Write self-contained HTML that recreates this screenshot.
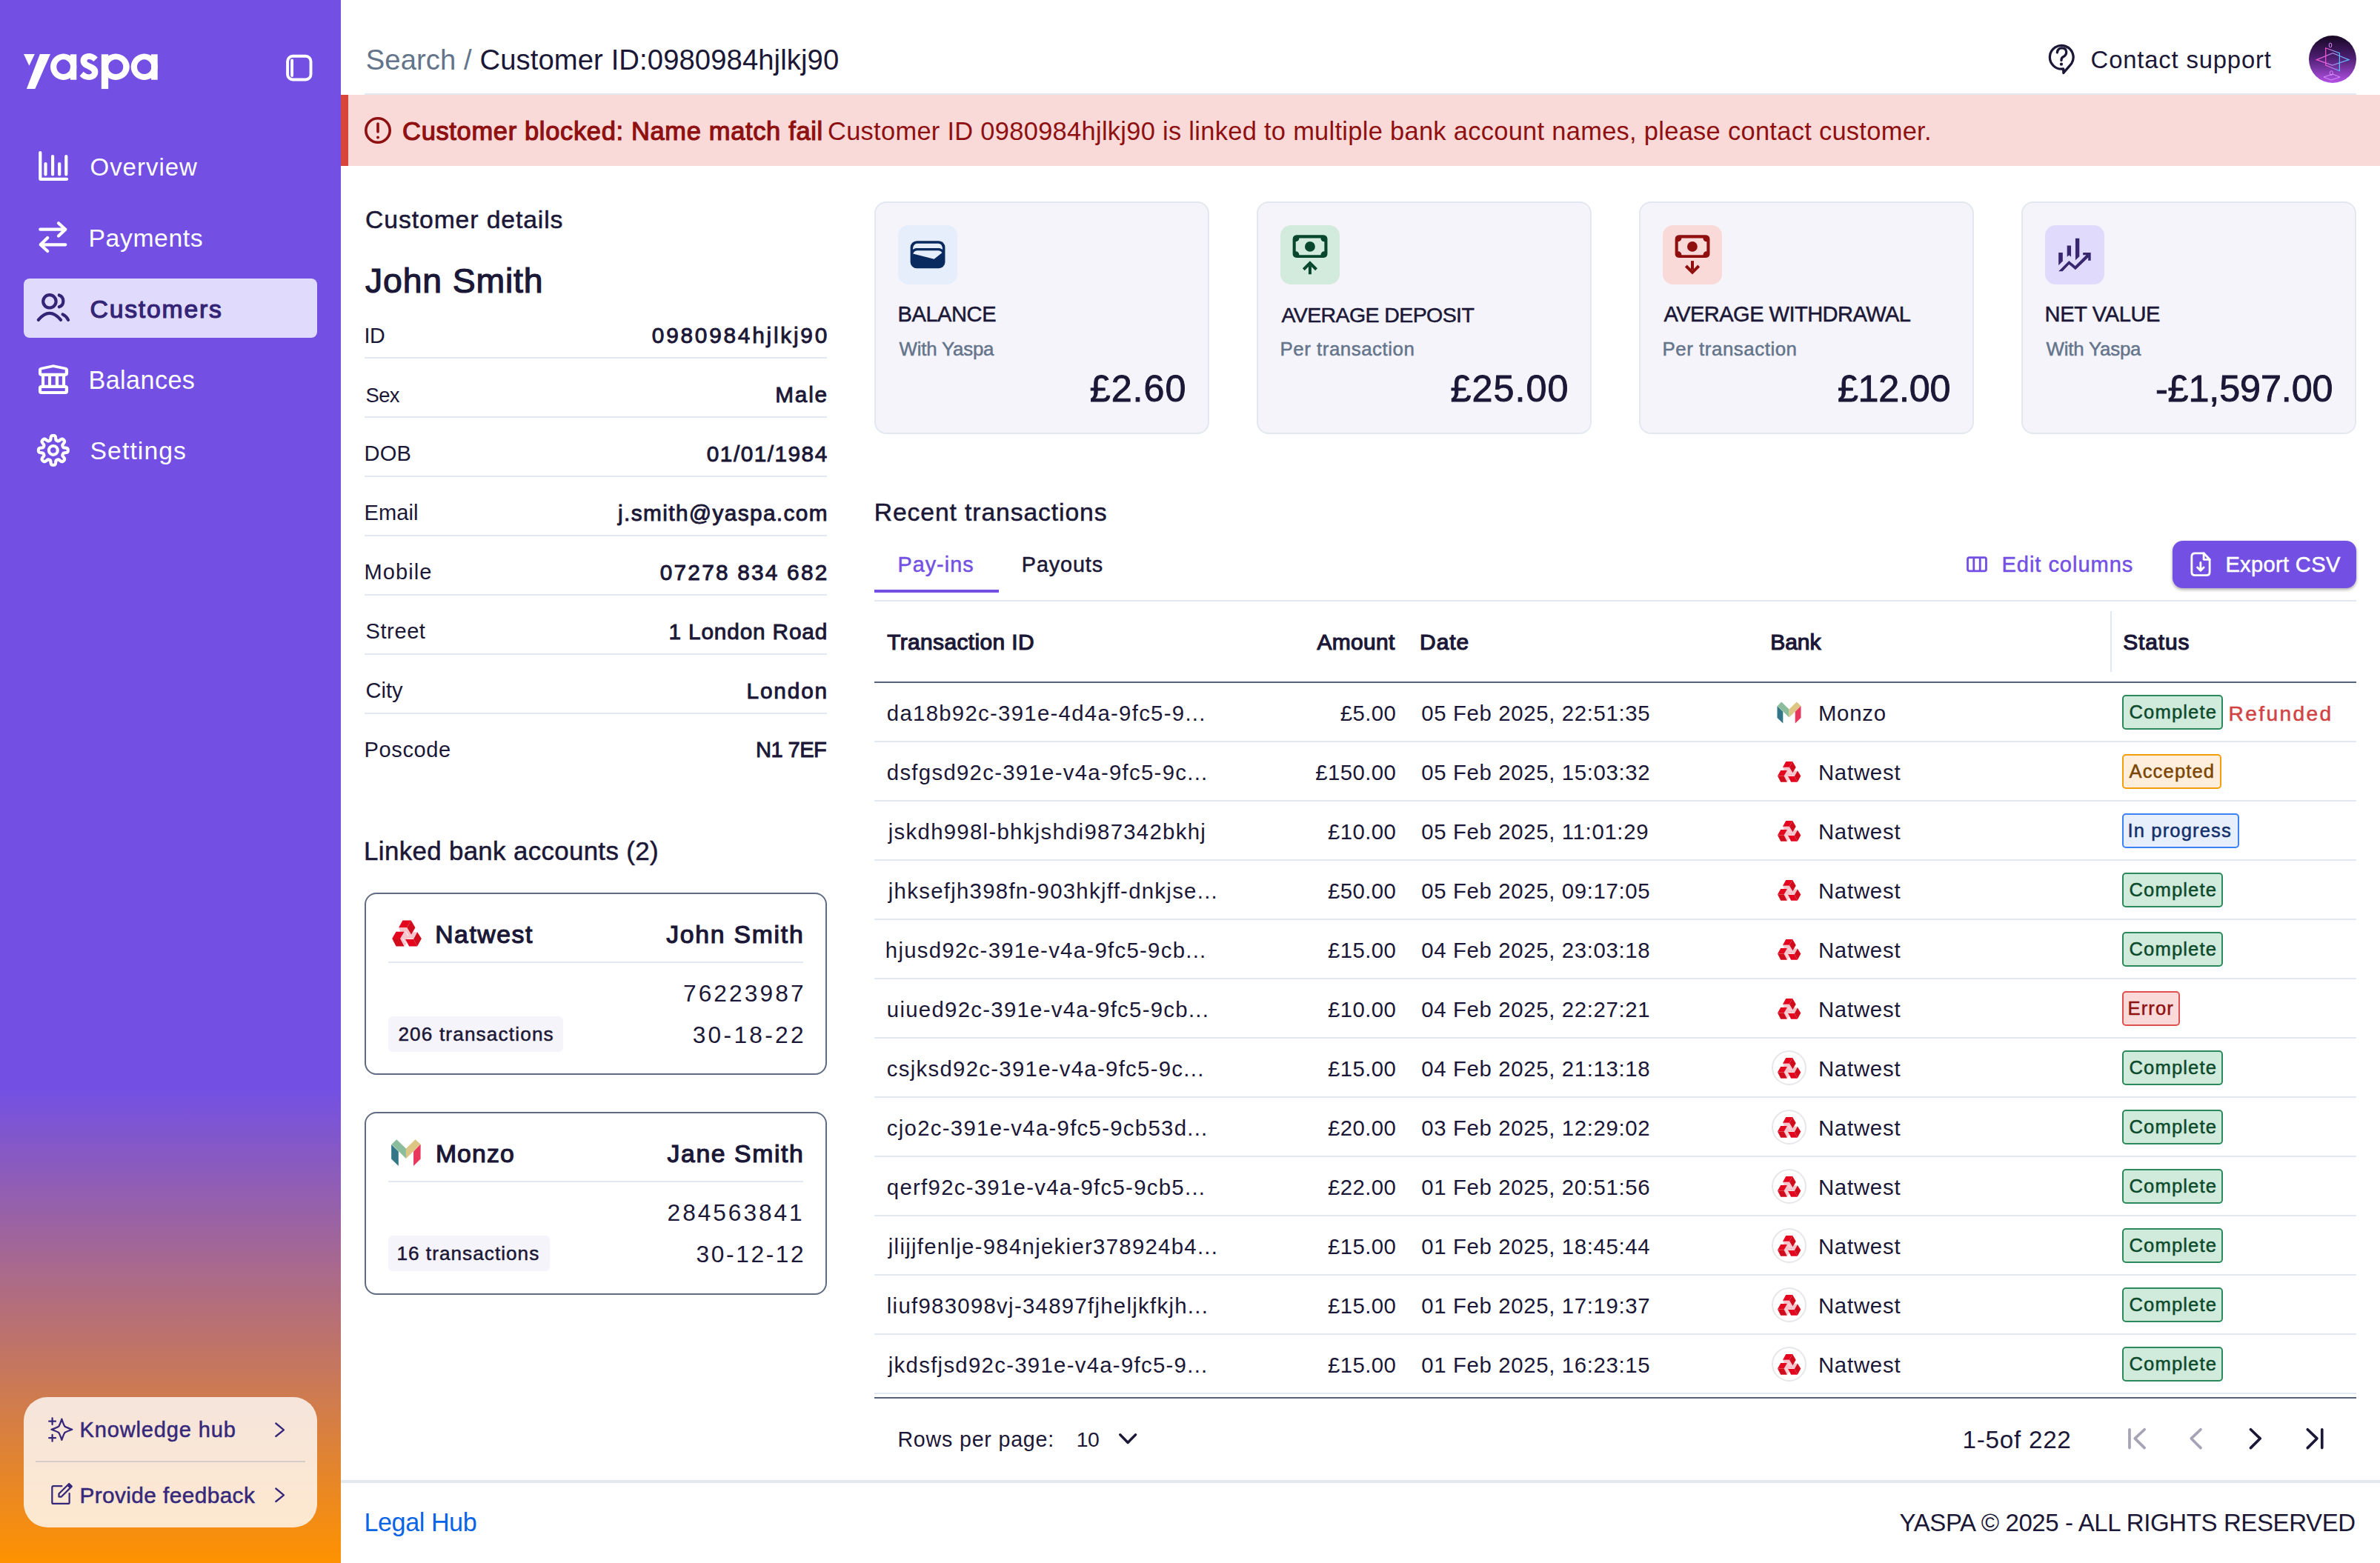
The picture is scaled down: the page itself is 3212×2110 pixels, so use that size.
<!DOCTYPE html>
<html><head><meta charset="utf-8">
<style>
*{box-sizing:border-box;margin:0;padding:0}
html,body{width:3212px;height:2110px;overflow:hidden;background:#fff}
body{font-family:"Liberation Sans",sans-serif;color:#1c1a3c}
#root{position:absolute;left:0;top:0;width:1606px;height:1055px;zoom:2;overflow:hidden}
.b{position:absolute}
.t{position:absolute;white-space:nowrap;line-height:1}
svg.ov{position:absolute;left:0;top:0;width:1606px;height:1055px}
@media (max-width:2400px){html,body{width:1606px;height:1055px}#root{zoom:1}}
</style></head><body><div id="root">
<div class="b" style="left:0.00px;top:0.00px;width:230.00px;height:1055.00px;background:linear-gradient(to bottom,#7350e3 0%,#7350e3 69.6%,#ff9200 100%)"></div>
<div class="b" style="left:16.00px;top:188.10px;width:198.00px;height:40.00px;background:#e0dbfc;border-radius:4px"></div>
<div class="b" style="left:16.20px;top:943.00px;width:197.80px;height:88.00px;background:rgba(255,255,255,0.8);border-radius:16px"></div>
<div class="b" style="left:24.00px;top:986.00px;width:182.00px;height:1.00px;background:#d4cbcb"></div>
<div class="b" style="left:246.00px;top:63.00px;width:1344.00px;height:1.00px;background:#e2e8f0"></div>
<div class="b" style="left:230.00px;top:64.00px;width:1376.00px;height:48.00px;background:#fad9d9"></div>
<div class="b" style="left:230.00px;top:64.00px;width:5.00px;height:48.00px;background:#d9443b"></div>
<div class="b" style="left:246.00px;top:241.00px;width:312.00px;height:1.00px;background:#e2e8f0"></div>
<div class="b" style="left:246.00px;top:281.00px;width:312.00px;height:1.00px;background:#e2e8f0"></div>
<div class="b" style="left:246.00px;top:321.00px;width:312.00px;height:1.00px;background:#e2e8f0"></div>
<div class="b" style="left:246.00px;top:361.00px;width:312.00px;height:1.00px;background:#e2e8f0"></div>
<div class="b" style="left:246.00px;top:401.00px;width:312.00px;height:1.00px;background:#e2e8f0"></div>
<div class="b" style="left:246.00px;top:441.00px;width:312.00px;height:1.00px;background:#e2e8f0"></div>
<div class="b" style="left:246.00px;top:481.00px;width:312.00px;height:1.00px;background:#e2e8f0"></div>
<div class="b" style="left:246.20px;top:602.40px;width:311.70px;height:123.30px;border:1px solid #5f6b80;border-radius:8px"></div>
<div class="b" style="left:262.10px;top:649.00px;width:279.80px;height:1.00px;background:#e2e8f0"></div>
<div class="b" style="left:246.20px;top:750.50px;width:311.70px;height:123.30px;border:1px solid #5f6b80;border-radius:8px"></div>
<div class="b" style="left:262.10px;top:797.10px;width:279.80px;height:1.00px;background:#e2e8f0"></div>
<div class="b" style="left:262.10px;top:686.10px;width:118.00px;height:24.00px;background:#f5f4fa;border-radius:3px"></div>
<div class="b" style="left:262.10px;top:834.20px;width:109.00px;height:24.00px;background:#f5f4fa;border-radius:3px"></div>
<div class="b" style="left:590.10px;top:136.20px;width:225.80px;height:156.60px;background:#f5f4fa;border:1px solid #e2e8f0;border-radius:8px"></div>
<div class="b" style="left:606.20px;top:152.00px;width:39.80px;height:39.80px;background:#e6eefb;border-radius:7px"></div>
<div class="b" style="left:848.10px;top:136.20px;width:225.80px;height:156.60px;background:#f5f4fa;border:1px solid #e2e8f0;border-radius:8px"></div>
<div class="b" style="left:864.20px;top:152.00px;width:39.80px;height:39.80px;background:#d3ebdc;border-radius:7px"></div>
<div class="b" style="left:1106.10px;top:136.20px;width:225.80px;height:156.60px;background:#f5f4fa;border:1px solid #e2e8f0;border-radius:8px"></div>
<div class="b" style="left:1122.20px;top:152.00px;width:39.80px;height:39.80px;background:#fad9d9;border-radius:7px"></div>
<div class="b" style="left:1364.10px;top:136.20px;width:225.80px;height:156.60px;background:#f5f4fa;border:1px solid #e2e8f0;border-radius:8px"></div>
<div class="b" style="left:1380.20px;top:152.00px;width:39.80px;height:39.80px;background:#e0dbfc;border-radius:7px"></div>
<div class="b" style="left:590.00px;top:397.90px;width:84.00px;height:2.00px;background:#7350e3"></div>
<div class="b" style="left:590.00px;top:405.00px;width:1000.00px;height:1.00px;background:#e2e8f0"></div>
<div class="b" style="left:1466.10px;top:365.00px;width:123.90px;height:31.80px;background:#7350e3;border-radius:7px;box-shadow:0 1px 2px rgba(0,0,0,0.35)"></div>
<div class="b" style="left:1424.00px;top:412.40px;width:1.00px;height:41.00px;background:#e2e8f0"></div>
<div class="b" style="left:590.00px;top:460.00px;width:1000.00px;height:1.00px;background:#56617a"></div>
<div class="b" style="left:590.00px;top:500.00px;width:1000.00px;height:1.00px;background:#e2e8f0"></div>
<div class="b" style="left:590.00px;top:540.00px;width:1000.00px;height:1.00px;background:#e2e8f0"></div>
<div class="b" style="left:590.00px;top:580.00px;width:1000.00px;height:1.00px;background:#e2e8f0"></div>
<div class="b" style="left:590.00px;top:620.00px;width:1000.00px;height:1.00px;background:#e2e8f0"></div>
<div class="b" style="left:590.00px;top:660.00px;width:1000.00px;height:1.00px;background:#e2e8f0"></div>
<div class="b" style="left:590.00px;top:700.00px;width:1000.00px;height:1.00px;background:#e2e8f0"></div>
<div class="b" style="left:590.00px;top:740.00px;width:1000.00px;height:1.00px;background:#e2e8f0"></div>
<div class="b" style="left:590.00px;top:780.00px;width:1000.00px;height:1.00px;background:#e2e8f0"></div>
<div class="b" style="left:590.00px;top:820.00px;width:1000.00px;height:1.00px;background:#e2e8f0"></div>
<div class="b" style="left:590.00px;top:860.00px;width:1000.00px;height:1.00px;background:#e2e8f0"></div>
<div class="b" style="left:590.00px;top:900.00px;width:1000.00px;height:1.00px;background:#e2e8f0"></div>
<div class="b" style="left:590.00px;top:940.00px;width:1000.00px;height:1.00px;background:#e2e8f0"></div>
<div class="b" style="left:590.00px;top:943.00px;width:1000.00px;height:1.20px;background:#56617a"></div>
<div class="b" style="left:230.00px;top:999.00px;width:1376.00px;height:2.00px;background:#e2e8f0"></div>
<div class="b" style="left:1432.10px;top:469.15px;width:67.70px;height:23.60px;background:#d0ebdc;border:1px solid #2a8a5c;border-radius:2.5px"></div>
<div class="b" style="left:1432.10px;top:509.15px;width:66.80px;height:23.60px;background:#ffeedb;border:1px solid #f59e0b;border-radius:2.5px"></div>
<div class="b" style="left:1432.10px;top:549.15px;width:78.90px;height:23.60px;background:#e8effc;border:1px solid #3b82f6;border-radius:2.5px"></div>
<div class="b" style="left:1432.10px;top:589.15px;width:67.70px;height:23.60px;background:#d0ebdc;border:1px solid #2a8a5c;border-radius:2.5px"></div>
<div class="b" style="left:1432.10px;top:629.15px;width:67.70px;height:23.60px;background:#d0ebdc;border:1px solid #2a8a5c;border-radius:2.5px"></div>
<div class="b" style="left:1432.10px;top:669.15px;width:38.80px;height:23.60px;background:#fad9d9;border:1px solid #e05050;border-radius:2.5px"></div>
<div class="b" style="left:1432.10px;top:709.15px;width:67.70px;height:23.60px;background:#d0ebdc;border:1px solid #2a8a5c;border-radius:2.5px"></div>
<div class="b" style="left:1432.10px;top:749.15px;width:67.70px;height:23.60px;background:#d0ebdc;border:1px solid #2a8a5c;border-radius:2.5px"></div>
<div class="b" style="left:1432.10px;top:789.15px;width:67.70px;height:23.60px;background:#d0ebdc;border:1px solid #2a8a5c;border-radius:2.5px"></div>
<div class="b" style="left:1432.10px;top:829.15px;width:67.70px;height:23.60px;background:#d0ebdc;border:1px solid #2a8a5c;border-radius:2.5px"></div>
<div class="b" style="left:1432.10px;top:869.15px;width:67.70px;height:23.60px;background:#d0ebdc;border:1px solid #2a8a5c;border-radius:2.5px"></div>
<div class="b" style="left:1432.10px;top:909.15px;width:67.70px;height:23.60px;background:#d0ebdc;border:1px solid #2a8a5c;border-radius:2.5px"></div>
<div class="b" style="left:1195.40px;top:709.10px;width:23.50px;height:23.50px;border:1px solid #e5e7eb;border-radius:50%"></div>
<div class="b" style="left:1195.40px;top:749.10px;width:23.50px;height:23.50px;border:1px solid #e5e7eb;border-radius:50%"></div>
<div class="b" style="left:1195.40px;top:789.10px;width:23.50px;height:23.50px;border:1px solid #e5e7eb;border-radius:50%"></div>
<div class="b" style="left:1195.40px;top:829.10px;width:23.50px;height:23.50px;border:1px solid #e5e7eb;border-radius:50%"></div>
<div class="b" style="left:1195.40px;top:869.10px;width:23.50px;height:23.50px;border:1px solid #e5e7eb;border-radius:50%"></div>
<div class="b" style="left:1195.40px;top:909.10px;width:23.50px;height:23.50px;border:1px solid #e5e7eb;border-radius:50%"></div>
<svg class="ov" viewBox="0 0 3212 2110" fill="none">
<g transform="translate(20.000 50.000) scale(0.17646)"><g fill="#fff">
<polygon points="68,130 152,130 110,220"/>
<polygon points="192,130 272,130 155,397 90,397"/>
<path fill-rule="evenodd" d="M372 128 a100 100 0 1 0 0.1 0z M372 172 a53 56 0 1 1 -0.1 0z"/>
<rect x="425" y="132" width="47" height="195"/>
<path fill-rule="evenodd" d="M772 128 a105 100 0 1 0 0.1 0z M772 172 a57 56 0 1 1 -0.1 0z"/>
<rect x="662" y="132" width="53" height="265"/>
<path fill-rule="evenodd" d="M990 128 a102 100 0 1 0 0.1 0z M990 172 a55 56 0 1 1 -0.1 0z"/>
<rect x="1043" y="132" width="49" height="195"/>
</g>
</g>
<g transform="translate(100.000 68.000) scale(0.02816)"><path fill="#fff" d="M1130 340 L935 535 C860 450 760 410 690 430 C610 455 590 520 660 570 C720 610 850 660 960 720 C1090 790 1150 900 1150 1030 C1150 1280 950 1420 710 1420 C520 1420 370 1340 270 1225 L450 1020 C560 1120 650 1150 720 1150 C800 1150 850 1110 850 1060 C850 1000 780 960 700 920 C580 860 460 810 400 740 C330 660 305 580 305 490 C305 270 500 140 710 140 C890 140 1040 230 1130 340 Z"/></g>
<g transform="translate(20.000 50.000) scale(0.17646)"><rect x="2086" y="146" width="178" height="180" rx="40" fill="none" stroke="#fff" stroke-width="22"/><line x1="2120" y1="178" x2="2120" y2="295" stroke="#fff" stroke-width="22" stroke-linecap="round"/></g>
<g fill="none" stroke="#fff" stroke-width="4.2" stroke-linecap="round" stroke-linejoin="round"><path d="M54.3 206 V241.8 H90.1"/><path d="M61.5 221 V235.5 M71.1 211 V235.5 M80.2 221 V235.5 M89.3 211 V235.5"/></g>
<g fill="none" stroke="#fff" stroke-width="4.2" stroke-linecap="round" stroke-linejoin="round"><path d="M54.3 309.7 H88.3 M79 301.3 L88.3 309.7 L79 318.6"/><path d="M88.3 330.3 H54.7 M64.2 321 L54.7 330.3 L64.2 339"/></g>
<g fill="none" stroke="#342476" stroke-width="4.2" stroke-linecap="round" stroke-linejoin="round"><circle cx="66.9" cy="406.8" r="8.7"/><path d="M51.8 431.9 Q66.9 414 82 431.9"/><path d="M79.8 398.5 A8.4 8.4 0 0 1 79.8 414.3"/><path d="M84.6 424.4 Q89.5 426.6 92.1 431.9"/></g>
<g transform="translate(46.000 486.000) scale(0.03327)"><path fill="#fff" fill-rule="evenodd" d="M180 420 Q180 310 290 295 L780 185 L1280 295 Q1385 310 1385 420 V540 Q1385 645 1265 660 V1015 Q1385 1030 1385 1130 V1270 Q1385 1385 1270 1385 H295 Q180 1385 180 1270 V1130 Q180 1030 300 1015 V660 Q180 645 180 540 Z M305 400 L775 300 L1255 400 V535 H305 Z M425 660 H570 V1015 H425 Z M695 660 H865 V1015 H695 Z M995 660 H1140 V1015 H995 Z M305 1140 H1255 V1260 H305 Z"/></g>
<g fill="none" stroke="#fff" stroke-width="4.2" stroke-linejoin="round"><path d="M71.85 588.00 L72.28 588.01 L72.72 588.05 L73.15 588.12 L73.57 588.24 L73.98 588.45 L74.37 588.79 L74.70 589.37 L74.97 590.23 L75.15 591.32 L75.28 592.42 L75.43 593.28 L75.61 593.87 L75.83 594.24 L76.08 594.49 L76.34 594.66 L76.61 594.81 L76.89 594.94 L77.17 595.06 L77.45 595.17 L77.74 595.28 L78.03 595.36 L78.34 595.42 L78.69 595.42 L79.11 595.32 L79.66 595.03 L80.37 594.52 L81.24 593.85 L82.14 593.20 L82.94 592.78 L83.58 592.61 L84.10 592.64 L84.53 592.78 L84.92 593.00 L85.27 593.25 L85.61 593.53 L85.92 593.83 L86.22 594.14 L86.50 594.48 L86.75 594.83 L86.97 595.22 L87.11 595.65 L87.14 596.17 L86.97 596.81 L86.55 597.61 L85.90 598.51 L85.23 599.38 L84.72 600.09 L84.43 600.64 L84.33 601.06 L84.33 601.41 L84.39 601.72 L84.47 602.01 L84.58 602.30 L84.69 602.58 L84.81 602.86 L84.94 603.14 L85.09 603.41 L85.26 603.67 L85.51 603.92 L85.88 604.14 L86.47 604.32 L87.33 604.47 L88.43 604.60 L89.52 604.78 L90.38 605.05 L90.96 605.38 L91.30 605.77 L91.51 606.18 L91.63 606.60 L91.70 607.03 L91.74 607.47 L91.75 607.90 L91.74 608.33 L91.70 608.77 L91.63 609.20 L91.51 609.62 L91.30 610.03 L90.96 610.42 L90.38 610.75 L89.52 611.02 L88.43 611.20 L87.33 611.33 L86.47 611.48 L85.88 611.66 L85.51 611.88 L85.26 612.13 L85.09 612.39 L84.94 612.66 L84.81 612.94 L84.69 613.22 L84.58 613.50 L84.47 613.79 L84.39 614.08 L84.33 614.39 L84.33 614.74 L84.43 615.16 L84.72 615.71 L85.23 616.42 L85.90 617.29 L86.55 618.19 L86.97 618.99 L87.14 619.63 L87.11 620.15 L86.97 620.58 L86.75 620.97 L86.50 621.32 L86.22 621.66 L85.92 621.97 L85.61 622.27 L85.27 622.55 L84.92 622.80 L84.53 623.02 L84.10 623.16 L83.58 623.19 L82.94 623.02 L82.14 622.60 L81.24 621.95 L80.37 621.28 L79.66 620.77 L79.11 620.48 L78.69 620.38 L78.34 620.38 L78.03 620.44 L77.74 620.52 L77.45 620.63 L77.17 620.74 L76.89 620.86 L76.61 620.99 L76.34 621.14 L76.08 621.31 L75.83 621.56 L75.61 621.93 L75.43 622.52 L75.28 623.38 L75.15 624.48 L74.97 625.57 L74.70 626.43 L74.37 627.01 L73.98 627.35 L73.57 627.56 L73.15 627.68 L72.72 627.75 L72.28 627.79 L71.85 627.80 L71.42 627.79 L70.98 627.75 L70.55 627.68 L70.13 627.56 L69.72 627.35 L69.33 627.01 L69.00 626.43 L68.73 625.57 L68.55 624.48 L68.42 623.38 L68.27 622.52 L68.09 621.93 L67.87 621.56 L67.62 621.31 L67.36 621.14 L67.09 620.99 L66.81 620.86 L66.53 620.74 L66.25 620.63 L65.96 620.52 L65.67 620.44 L65.36 620.38 L65.01 620.38 L64.59 620.48 L64.04 620.77 L63.33 621.28 L62.46 621.95 L61.56 622.60 L60.76 623.02 L60.12 623.19 L59.60 623.16 L59.17 623.02 L58.78 622.80 L58.43 622.55 L58.09 622.27 L57.78 621.97 L57.48 621.66 L57.20 621.32 L56.95 620.97 L56.73 620.58 L56.59 620.15 L56.56 619.63 L56.73 618.99 L57.15 618.19 L57.80 617.29 L58.47 616.42 L58.98 615.71 L59.27 615.16 L59.37 614.74 L59.37 614.39 L59.31 614.08 L59.23 613.79 L59.12 613.50 L59.01 613.22 L58.89 612.94 L58.76 612.66 L58.61 612.39 L58.44 612.13 L58.19 611.88 L57.82 611.66 L57.23 611.48 L56.37 611.33 L55.27 611.20 L54.18 611.02 L53.32 610.75 L52.74 610.42 L52.40 610.03 L52.19 609.62 L52.07 609.20 L52.00 608.77 L51.96 608.33 L51.95 607.90 L51.96 607.47 L52.00 607.03 L52.07 606.60 L52.19 606.18 L52.40 605.77 L52.74 605.38 L53.32 605.05 L54.18 604.78 L55.27 604.60 L56.37 604.47 L57.23 604.32 L57.82 604.14 L58.19 603.92 L58.44 603.67 L58.61 603.41 L58.76 603.14 L58.89 602.86 L59.01 602.58 L59.12 602.30 L59.23 602.01 L59.31 601.72 L59.37 601.41 L59.37 601.06 L59.27 600.64 L58.98 600.09 L58.47 599.38 L57.80 598.51 L57.15 597.61 L56.73 596.81 L56.56 596.17 L56.59 595.65 L56.73 595.22 L56.95 594.83 L57.20 594.48 L57.48 594.14 L57.78 593.83 L58.09 593.53 L58.43 593.25 L58.78 593.00 L59.17 592.78 L59.60 592.64 L60.12 592.61 L60.76 592.78 L61.56 593.20 L62.46 593.85 L63.33 594.52 L64.04 595.03 L64.59 595.32 L65.01 595.42 L65.36 595.42 L65.67 595.36 L65.96 595.28 L66.25 595.17 L66.53 595.06 L66.81 594.94 L67.09 594.81 L67.36 594.66 L67.62 594.49 L67.87 594.24 L68.09 593.87 L68.27 593.28 L68.42 592.42 L68.55 591.32 L68.73 590.23 L69.00 589.37 L69.33 588.79 L69.72 588.45 L70.13 588.24 L70.55 588.12 L70.98 588.05 L71.42 588.01Z"/><circle cx="71.85" cy="607.90" r="5.9"/></g>
<g transform="translate(56.000 1900.000) scale(0.08961)"><g fill="none" stroke="#35287a" stroke-width="25" stroke-linecap="round" stroke-linejoin="round">
<path d="M305 175 Q330 255 350 285 Q380 305 462 332 Q380 360 350 380 Q330 410 305 490 Q280 410 260 380 Q230 360 150 332 Q230 305 260 285 Q280 255 305 175Z"/>
<path d="M163 160 V258 M114 208 H212 M163 412 V510 M114 460 H212"/></g></g>
<g transform="translate(56.000 1900.000) scale(0.08961)"><g fill="none" stroke="#35287a" stroke-width="25" stroke-linecap="round" stroke-linejoin="round">
<path d="M305 1185 H180 Q160 1185 160 1205 V1430 Q160 1450 180 1450 H400 Q420 1450 420 1430 V1295"/>
<path d="M262 1300 L415 1150 L455 1190 L300 1345 H262 Z"/></g>
<path d="M385 1180 L415 1150 L455 1190 L425 1220Z" fill="#35287a"/></g>
<g fill="none" stroke="#35287a" stroke-width="2.3" stroke-linecap="round" stroke-linejoin="round"><path d="M372.3 1921.5 L383 1930.3 L372.3 1939"/><path d="M372.3 2009.5 L383 2018.3 L372.3 2027"/></g>
<g transform="translate(2740.000 30.000) scale(0.19327)"><g fill="none" stroke="#1b1736" stroke-width="17" stroke-linecap="round" stroke-linejoin="round">
<path d="M232 354 L231.2 325.8 A82 82 0 1 1 287 290 Z"/>
<path d="M188 212 Q192 180 220 180 Q252 180 252 210 Q252 232 228 243 Q217 250 217 266"/></g>
<circle cx="217" cy="293" r="11" fill="#1b1736"/></g>
<g fill="none" stroke="#8f1010" stroke-width="3.6" stroke-linecap="round"><circle cx="510" cy="176" r="16.2"/><path d="M510 167 V178"/></g><circle cx="510" cy="185.5" r="2" fill="#8f1010"/>
<g transform="translate(1212.000 304.000) scale(0.05118)"><rect x="325" y="415" width="915" height="725" rx="170" fill="#082a5e"/>
<path d="M390 645 C390 560 430 485 500 485 L1065 485 C1130 485 1175 540 1175 645 C1140 615 1100 605 1065 605 L500 605 C460 605 420 615 390 645Z" fill="#e6eefb"/>
<path d="M395 750 C420 700 460 670 510 670 L1060 670 C1100 670 1140 690 1160 730 L950 895Z" fill="#e6eefb"/></g>
<g transform="translate(1728.000 304.000) scale(0.05118)"><rect x="325" y="260" width="915" height="602" rx="100" fill="#08472d"/><path d="M495 340 H1065 A90 90 0 0 0 1160 435 V690 A90 90 0 0 0 1065 785 H495 A90 90 0 0 0 405 690 V435 A90 90 0 0 0 495 340Z" fill="#d3ebdc"/><circle cx="780" cy="565" r="135" fill="#08472d"/><g fill="none" stroke="#08472d" stroke-width="78"><path d="M780 1060 V1295"/><path d="M612 1168 L780 1000 L948 1168"/></g></g>
<g transform="translate(2244.000 304.000) scale(0.05118)"><rect x="325" y="260" width="915" height="602" rx="100" fill="#8f0f0f"/><path d="M495 340 H1065 A90 90 0 0 0 1160 435 V690 A90 90 0 0 0 1065 785 H495 A90 90 0 0 0 405 690 V435 A90 90 0 0 0 495 340Z" fill="#fad9d9"/><circle cx="780" cy="565" r="135" fill="#8f0f0f"/><g fill="none" stroke="#8f0f0f" stroke-width="78"><path d="M782 940 V1180"/><path d="M612 1075 L782 1245 L952 1075"/></g></g>
<g transform="translate(2760.000 304.000) scale(0.05118)"><g fill="#38266f">
<polygon points="355,725 465,725 465,950 355,1060"/>
<polygon points="580,535 685,535 685,835 632,790 580,835"/>
<polygon points="800,345 905,345 905,825 800,925"/>
<polygon points="355,1215 632,940 795,1075 1085,785 1000,785 1000,725 1205,725 1205,935 1135,935 1140,850 800,1175 632,1035 460,1215"/>
</g></g>
<g transform="translate(522.900 1234.900) scale(0.03236)"><polygon points="480,548 812,548 995,838 1078,718 1245,718 1085,1018 748,1018 800,1180 715,1310 545,995 708,705 545,705" fill="#f5c3ca"/>
<path d="M760 700 L870 880 M640 990 L760 1190 M820 1005 L1050 1005" stroke="#fff" stroke-width="30" opacity="0.8"/>
<polygon points="470,535 635,235 985,235 815,535" fill="#e4051f"/>
<polygon points="985,235 1160,540 995,830 815,535" fill="#d10c1d"/>
<polygon points="195,995 360,705 700,705 535,995" fill="#e4051f"/>
<polygon points="195,995 535,995 700,1320 360,1320" fill="#d10c1d"/>
<polygon points="745,1020 1085,1020 1245,1320 905,1320" fill="#e4051f"/>
<polygon points="1085,1020 1245,720 1420,995 1245,1320" fill="#d10c1d"/></g>
<g transform="translate(522.000 1532.000) scale(0.03071)"><polygon points="200,420 515,730 515,1365 200,1060" fill="#327688"/>
<polygon points="215,415 430,200 845,600 845,1040" fill="#8bbc9b"/>
<polygon points="845,600 1255,200 1485,415 845,1040" fill="#ddc684"/>
<polygon points="1485,415 1485,1060 1175,1365 1175,730" fill="#e8365d"/></g>
<g transform="translate(2393.525 942.625) scale(0.02488)"><polygon points="200,420 515,730 515,1365 200,1060" fill="#327688"/>
<polygon points="215,415 430,200 845,600 845,1040" fill="#8bbc9b"/>
<polygon points="845,600 1255,200 1485,415 845,1040" fill="#ddc684"/>
<polygon points="1485,415 1485,1060 1175,1365 1175,730" fill="#e8365d"/></g>
<g transform="translate(2394.000 1022.000) scale(0.02560)"><polygon points="480,548 812,548 995,838 1078,718 1245,718 1085,1018 748,1018 800,1180 715,1310 545,995 708,705 545,705" fill="#f5c3ca"/>
<path d="M760 700 L870 880 M640 990 L760 1190 M820 1005 L1050 1005" stroke="#fff" stroke-width="30" opacity="0.8"/>
<polygon points="470,535 635,235 985,235 815,535" fill="#e4051f"/>
<polygon points="985,235 1160,540 995,830 815,535" fill="#d10c1d"/>
<polygon points="195,995 360,705 700,705 535,995" fill="#e4051f"/>
<polygon points="195,995 535,995 700,1320 360,1320" fill="#d10c1d"/>
<polygon points="745,1020 1085,1020 1245,1320 905,1320" fill="#e4051f"/>
<polygon points="1085,1020 1245,720 1420,995 1245,1320" fill="#d10c1d"/></g>
<g transform="translate(2394.000 1102.000) scale(0.02560)"><polygon points="480,548 812,548 995,838 1078,718 1245,718 1085,1018 748,1018 800,1180 715,1310 545,995 708,705 545,705" fill="#f5c3ca"/>
<path d="M760 700 L870 880 M640 990 L760 1190 M820 1005 L1050 1005" stroke="#fff" stroke-width="30" opacity="0.8"/>
<polygon points="470,535 635,235 985,235 815,535" fill="#e4051f"/>
<polygon points="985,235 1160,540 995,830 815,535" fill="#d10c1d"/>
<polygon points="195,995 360,705 700,705 535,995" fill="#e4051f"/>
<polygon points="195,995 535,995 700,1320 360,1320" fill="#d10c1d"/>
<polygon points="745,1020 1085,1020 1245,1320 905,1320" fill="#e4051f"/>
<polygon points="1085,1020 1245,720 1420,995 1245,1320" fill="#d10c1d"/></g>
<g transform="translate(2394.000 1182.000) scale(0.02560)"><polygon points="480,548 812,548 995,838 1078,718 1245,718 1085,1018 748,1018 800,1180 715,1310 545,995 708,705 545,705" fill="#f5c3ca"/>
<path d="M760 700 L870 880 M640 990 L760 1190 M820 1005 L1050 1005" stroke="#fff" stroke-width="30" opacity="0.8"/>
<polygon points="470,535 635,235 985,235 815,535" fill="#e4051f"/>
<polygon points="985,235 1160,540 995,830 815,535" fill="#d10c1d"/>
<polygon points="195,995 360,705 700,705 535,995" fill="#e4051f"/>
<polygon points="195,995 535,995 700,1320 360,1320" fill="#d10c1d"/>
<polygon points="745,1020 1085,1020 1245,1320 905,1320" fill="#e4051f"/>
<polygon points="1085,1020 1245,720 1420,995 1245,1320" fill="#d10c1d"/></g>
<g transform="translate(2394.000 1262.000) scale(0.02560)"><polygon points="480,548 812,548 995,838 1078,718 1245,718 1085,1018 748,1018 800,1180 715,1310 545,995 708,705 545,705" fill="#f5c3ca"/>
<path d="M760 700 L870 880 M640 990 L760 1190 M820 1005 L1050 1005" stroke="#fff" stroke-width="30" opacity="0.8"/>
<polygon points="470,535 635,235 985,235 815,535" fill="#e4051f"/>
<polygon points="985,235 1160,540 995,830 815,535" fill="#d10c1d"/>
<polygon points="195,995 360,705 700,705 535,995" fill="#e4051f"/>
<polygon points="195,995 535,995 700,1320 360,1320" fill="#d10c1d"/>
<polygon points="745,1020 1085,1020 1245,1320 905,1320" fill="#e4051f"/>
<polygon points="1085,1020 1245,720 1420,995 1245,1320" fill="#d10c1d"/></g>
<g transform="translate(2394.000 1342.000) scale(0.02560)"><polygon points="480,548 812,548 995,838 1078,718 1245,718 1085,1018 748,1018 800,1180 715,1310 545,995 708,705 545,705" fill="#f5c3ca"/>
<path d="M760 700 L870 880 M640 990 L760 1190 M820 1005 L1050 1005" stroke="#fff" stroke-width="30" opacity="0.8"/>
<polygon points="470,535 635,235 985,235 815,535" fill="#e4051f"/>
<polygon points="985,235 1160,540 995,830 815,535" fill="#d10c1d"/>
<polygon points="195,995 360,705 700,705 535,995" fill="#e4051f"/>
<polygon points="195,995 535,995 700,1320 360,1320" fill="#d10c1d"/>
<polygon points="745,1020 1085,1020 1245,1320 905,1320" fill="#e4051f"/>
<polygon points="1085,1020 1245,720 1420,995 1245,1320" fill="#d10c1d"/></g>
<g transform="translate(2394.000 1422.000) scale(0.02560)"><polygon points="480,548 812,548 995,838 1078,718 1245,718 1085,1018 748,1018 800,1180 715,1310 545,995 708,705 545,705" fill="#f5c3ca"/>
<path d="M760 700 L870 880 M640 990 L760 1190 M820 1005 L1050 1005" stroke="#fff" stroke-width="30" opacity="0.8"/>
<polygon points="470,535 635,235 985,235 815,535" fill="#e4051f"/>
<polygon points="985,235 1160,540 995,830 815,535" fill="#d10c1d"/>
<polygon points="195,995 360,705 700,705 535,995" fill="#e4051f"/>
<polygon points="195,995 535,995 700,1320 360,1320" fill="#d10c1d"/>
<polygon points="745,1020 1085,1020 1245,1320 905,1320" fill="#e4051f"/>
<polygon points="1085,1020 1245,720 1420,995 1245,1320" fill="#d10c1d"/></g>
<g transform="translate(2394.000 1502.000) scale(0.02560)"><polygon points="480,548 812,548 995,838 1078,718 1245,718 1085,1018 748,1018 800,1180 715,1310 545,995 708,705 545,705" fill="#f5c3ca"/>
<path d="M760 700 L870 880 M640 990 L760 1190 M820 1005 L1050 1005" stroke="#fff" stroke-width="30" opacity="0.8"/>
<polygon points="470,535 635,235 985,235 815,535" fill="#e4051f"/>
<polygon points="985,235 1160,540 995,830 815,535" fill="#d10c1d"/>
<polygon points="195,995 360,705 700,705 535,995" fill="#e4051f"/>
<polygon points="195,995 535,995 700,1320 360,1320" fill="#d10c1d"/>
<polygon points="745,1020 1085,1020 1245,1320 905,1320" fill="#e4051f"/>
<polygon points="1085,1020 1245,720 1420,995 1245,1320" fill="#d10c1d"/></g>
<g transform="translate(2394.000 1582.000) scale(0.02560)"><polygon points="480,548 812,548 995,838 1078,718 1245,718 1085,1018 748,1018 800,1180 715,1310 545,995 708,705 545,705" fill="#f5c3ca"/>
<path d="M760 700 L870 880 M640 990 L760 1190 M820 1005 L1050 1005" stroke="#fff" stroke-width="30" opacity="0.8"/>
<polygon points="470,535 635,235 985,235 815,535" fill="#e4051f"/>
<polygon points="985,235 1160,540 995,830 815,535" fill="#d10c1d"/>
<polygon points="195,995 360,705 700,705 535,995" fill="#e4051f"/>
<polygon points="195,995 535,995 700,1320 360,1320" fill="#d10c1d"/>
<polygon points="745,1020 1085,1020 1245,1320 905,1320" fill="#e4051f"/>
<polygon points="1085,1020 1245,720 1420,995 1245,1320" fill="#d10c1d"/></g>
<g transform="translate(2394.000 1662.000) scale(0.02560)"><polygon points="480,548 812,548 995,838 1078,718 1245,718 1085,1018 748,1018 800,1180 715,1310 545,995 708,705 545,705" fill="#f5c3ca"/>
<path d="M760 700 L870 880 M640 990 L760 1190 M820 1005 L1050 1005" stroke="#fff" stroke-width="30" opacity="0.8"/>
<polygon points="470,535 635,235 985,235 815,535" fill="#e4051f"/>
<polygon points="985,235 1160,540 995,830 815,535" fill="#d10c1d"/>
<polygon points="195,995 360,705 700,705 535,995" fill="#e4051f"/>
<polygon points="195,995 535,995 700,1320 360,1320" fill="#d10c1d"/>
<polygon points="745,1020 1085,1020 1245,1320 905,1320" fill="#e4051f"/>
<polygon points="1085,1020 1245,720 1420,995 1245,1320" fill="#d10c1d"/></g>
<g transform="translate(2394.000 1742.000) scale(0.02560)"><polygon points="480,548 812,548 995,838 1078,718 1245,718 1085,1018 748,1018 800,1180 715,1310 545,995 708,705 545,705" fill="#f5c3ca"/>
<path d="M760 700 L870 880 M640 990 L760 1190 M820 1005 L1050 1005" stroke="#fff" stroke-width="30" opacity="0.8"/>
<polygon points="470,535 635,235 985,235 815,535" fill="#e4051f"/>
<polygon points="985,235 1160,540 995,830 815,535" fill="#d10c1d"/>
<polygon points="195,995 360,705 700,705 535,995" fill="#e4051f"/>
<polygon points="195,995 535,995 700,1320 360,1320" fill="#d10c1d"/>
<polygon points="745,1020 1085,1020 1245,1320 905,1320" fill="#e4051f"/>
<polygon points="1085,1020 1245,720 1420,995 1245,1320" fill="#d10c1d"/></g>
<g transform="translate(2394.000 1822.000) scale(0.02560)"><polygon points="480,548 812,548 995,838 1078,718 1245,718 1085,1018 748,1018 800,1180 715,1310 545,995 708,705 545,705" fill="#f5c3ca"/>
<path d="M760 700 L870 880 M640 990 L760 1190 M820 1005 L1050 1005" stroke="#fff" stroke-width="30" opacity="0.8"/>
<polygon points="470,535 635,235 985,235 815,535" fill="#e4051f"/>
<polygon points="985,235 1160,540 995,830 815,535" fill="#d10c1d"/>
<polygon points="195,995 360,705 700,705 535,995" fill="#e4051f"/>
<polygon points="195,995 535,995 700,1320 360,1320" fill="#d10c1d"/>
<polygon points="745,1020 1085,1020 1245,1320 905,1320" fill="#e4051f"/>
<polygon points="1085,1020 1245,720 1420,995 1245,1320" fill="#d10c1d"/></g>
<g transform="translate(2640.000 720.000) scale(0.23529)"><g fill="none" stroke="#7350e3" stroke-width="12" stroke-linejoin="round"><rect x="66" y="139" width="106" height="77" rx="10"/><path d="M101 139 V216 M137 139 V216"/></g></g>
<g transform="translate(2640.000 720.000) scale(0.23529)"><g fill="none" stroke="#fff" stroke-width="12" stroke-linecap="round" stroke-linejoin="round"><path d="M1375 114 H1420 L1454 150 V222 Q1454 241 1435 241 H1370 Q1351 241 1351 222 V133 Q1351 114 1370 114Z"/><path d="M1420 114 V150 H1454"/><path d="M1402 168 V212 M1384 196 L1402 214 L1420 196"/></g></g>
<g transform="translate(2620.000 1900.000) scale(0.24372)"><g fill="none" stroke-width="15" stroke-linecap="round" stroke-linejoin="round">
<path d="M1042 122 V224 M1125 122 L1072 172 L1125 224" stroke="#a5a3b5"/>
<path d="M1436 122 L1384 172 L1436 224" stroke="#a5a3b5"/>
<path d="M1713 122 L1765 172 L1713 224" stroke="#1b1736"/>
<path d="M2028 122 L2080 172 L2028 224 M2108 122 V224" stroke="#1b1736"/>
</g></g>
<g transform="translate(1170.000 1800.000) scale(0.25208)"><path d="M1356 543 L1397 585 L1438 543" fill="none" stroke="#1b1736" stroke-width="14" stroke-linecap="round" stroke-linejoin="round"/></g>
<defs><linearGradient id="avg" x1="0" y1="0" x2="0" y2="1"><stop offset="0" stop-color="#160722"/><stop offset="0.45" stop-color="#4a1d6e"/><stop offset="1" stop-color="#b452e6"/></linearGradient>
<linearGradient id="avs" x1="0" y1="0" x2="1" y2="0"><stop offset="0" stop-color="#ff4fd0"/><stop offset="1" stop-color="#4fc3ff"/></linearGradient></defs>
<circle cx="3148" cy="80" r="32" fill="url(#avg)"/>
<g fill="none" stroke="url(#avs)" stroke-width="1.2"><path d="M3126.5 80.6 L3148.3 71.6 L3170 80.6 L3147.7 88 Z"/><path d="M3138.7 64.8 L3157.4 71.6 L3157.4 95.7 L3138.7 88 Z"/></g>
<g fill="none" stroke="#d98cff" stroke-width="1"><ellipse cx="3145" cy="61" rx="1.8" ry="3"/><ellipse cx="3146.3" cy="98.6" rx="2" ry="3"/><path d="M3136 104 L3148 100 L3158 104 L3146 108Z"/></g>
</svg>
<div class="t" style="left:60.75px;top:104.38px;font-size:16.497px;letter-spacing:0.494px;color:#fff">Overview</div>
<div class="t" style="left:59.75px;top:152.37px;font-size:16.860px;letter-spacing:0.303px;color:#fff">Payments</div>
<div class="t" style="left:60.75px;top:200.27px;font-size:16.860px;letter-spacing:0.897px;color:#342476;-webkit-text-stroke:0.6px #342476">Customers</div>
<div class="t" style="left:59.75px;top:248.19px;font-size:17.078px;letter-spacing:0.213px;color:#fff">Balances</div>
<div class="t" style="left:60.75px;top:296.12px;font-size:16.860px;letter-spacing:0.545px;color:#fff">Settings</div>
<div class="t" style="left:53.70px;top:958.24px;font-size:14.535px;letter-spacing:0.425px;color:#35287a;-webkit-text-stroke:0.25px #35287a">Knowledge hub</div>
<div class="t" style="left:53.70px;top:1002.04px;font-size:14.898px;letter-spacing:0.210px;color:#35287a;-webkit-text-stroke:0.25px #35287a">Provide feedback</div>
<div class="t" style="left:246.85px;top:30.92px;font-size:19.113px;letter-spacing:0.048px;color:#1b1736"><span style="color:#64748b">Search /</span> Customer ID:0980984hjlkj90</div>
<div class="t" style="left:1410.80px;top:32.59px;font-size:16.424px;letter-spacing:0.413px;color:#1b1736">Contact support</div>
<div class="t" style="left:271.55px;top:79.97px;font-size:17.224px;letter-spacing:0.339px;color:#8f1010;-webkit-text-stroke:0.6px #8f1010">Customer blocked: Name match fail</div>
<div class="t" style="left:558.50px;top:79.97px;font-size:17.224px;letter-spacing:0.147px;color:#8f1010">Customer ID 0980984hjlkj90 is linked to multiple bank account names, please contact customer.</div>
<div class="t" style="left:246.55px;top:140.22px;font-size:16.860px;letter-spacing:0.446px;color:#1b1736;-webkit-text-stroke:0.25px #1b1736">Customer details</div>
<div class="t" style="left:246.55px;top:178.17px;font-size:23.183px;letter-spacing:0.419px;color:#1b1736;-webkit-text-stroke:0.6px #1b1736">John Smith</div>
<div class="t" style="left:245.76px;top:219.27px;font-size:14.331px;letter-spacing:-0.300px;color:#1b1736">ID</div>
<div class="t" style="left:439.90px;top:218.79px;font-size:14.898px;letter-spacing:1.388px;color:#1b1736;-webkit-text-stroke:0.45px #1b1736">0980984hjlkj90</div>
<div class="t" style="left:246.75px;top:259.81px;font-size:13.686px;letter-spacing:-0.300px;color:#1b1736">Sex</div>
<div class="t" style="left:523.15px;top:258.79px;font-size:14.898px;letter-spacing:0.877px;color:#1b1736;-webkit-text-stroke:0.45px #1b1736">Male</div>
<div class="t" style="left:245.75px;top:299.09px;font-size:14.535px;letter-spacing:0.088px;color:#1b1736">DOB</div>
<div class="t" style="left:476.90px;top:298.79px;font-size:14.898px;letter-spacing:0.742px;color:#1b1736;-webkit-text-stroke:0.45px #1b1736">01/01/1984</div>
<div class="t" style="left:245.75px;top:339.09px;font-size:14.535px;letter-spacing:0.032px;color:#1b1736">Email</div>
<div class="t" style="left:417.05px;top:338.79px;font-size:14.898px;letter-spacing:0.693px;color:#1b1736;-webkit-text-stroke:0.45px #1b1736">j.smith@yaspa.com</div>
<div class="t" style="left:245.75px;top:379.09px;font-size:14.535px;letter-spacing:0.533px;color:#1b1736">Mobile</div>
<div class="t" style="left:445.40px;top:378.79px;font-size:14.898px;letter-spacing:1.113px;color:#1b1736;-webkit-text-stroke:0.45px #1b1736">07278 834 682</div>
<div class="t" style="left:246.75px;top:419.09px;font-size:14.535px;letter-spacing:0.291px;color:#1b1736">Street</div>
<div class="t" style="left:451.25px;top:418.79px;font-size:14.898px;letter-spacing:0.420px;color:#1b1736;-webkit-text-stroke:0.45px #1b1736">1 London Road</div>
<div class="t" style="left:246.75px;top:459.09px;font-size:14.535px;letter-spacing:0.003px;color:#1b1736">City</div>
<div class="t" style="left:503.75px;top:458.79px;font-size:14.898px;letter-spacing:0.927px;color:#1b1736;-webkit-text-stroke:0.45px #1b1736">London</div>
<div class="t" style="left:245.75px;top:499.09px;font-size:14.535px;letter-spacing:0.306px;color:#1b1736">Poscode</div>
<div class="t" style="left:510.02px;top:499.06px;font-size:14.569px;letter-spacing:-0.300px;color:#1b1736;-webkit-text-stroke:0.45px #1b1736">N1 7EF</div>
<div class="t" style="left:245.55px;top:565.88px;font-size:17.442px;letter-spacing:0.168px;color:#1b1736;-webkit-text-stroke:0.25px #1b1736">Linked bank accounts (2)</div>
<div class="t" style="left:293.60px;top:622.37px;font-size:16.860px;letter-spacing:0.780px;color:#1b1736;-webkit-text-stroke:0.6px #1b1736">Natwest</div>
<div class="t" style="left:449.60px;top:622.37px;font-size:16.860px;letter-spacing:0.882px;color:#1b1736;-webkit-text-stroke:0.6px #1b1736">John Smith</div>
<div class="t" style="left:460.95px;top:662.84px;font-size:15.843px;letter-spacing:1.561px;color:#1b1736">76223987</div>
<div class="t" style="left:467.35px;top:690.84px;font-size:15.843px;letter-spacing:1.656px;color:#1b1736">30-18-22</div>
<div class="t" style="left:268.70px;top:691.52px;font-size:13.081px;letter-spacing:0.578px;color:#1b1736;-webkit-text-stroke:0.25px #1b1736">206 transactions</div>
<div class="t" style="left:293.95px;top:770.47px;font-size:16.860px;letter-spacing:0.568px;color:#1b1736;-webkit-text-stroke:0.6px #1b1736">Monzo</div>
<div class="t" style="left:450.30px;top:770.47px;font-size:16.860px;letter-spacing:0.804px;color:#1b1736;-webkit-text-stroke:0.6px #1b1736">Jane Smith</div>
<div class="t" style="left:450.30px;top:810.94px;font-size:15.843px;letter-spacing:1.472px;color:#1b1736">284563841</div>
<div class="t" style="left:469.80px;top:838.94px;font-size:15.843px;letter-spacing:1.306px;color:#1b1736">30-12-12</div>
<div class="t" style="left:267.70px;top:839.62px;font-size:13.081px;letter-spacing:0.518px;color:#1b1736;-webkit-text-stroke:0.25px #1b1736">16 transactions</div>
<div class="t" style="left:605.75px;top:205.09px;font-size:14.535px;letter-spacing:-0.222px;color:#1b1736;-webkit-text-stroke:0.25px #1b1736">BALANCE</div>
<div class="t" style="left:606.75px;top:229.50px;font-size:12.936px;letter-spacing:-0.103px;color:#64748b;-webkit-text-stroke:0.25px #64748b">With Yaspa</div>
<div class="t" style="left:735.40px;top:250.16px;font-size:25.145px;letter-spacing:0.475px;color:#1b1736;-webkit-text-stroke:0.45px #1b1736">£2.60</div>
<div class="t" style="left:864.75px;top:205.33px;font-size:14.250px;letter-spacing:-0.300px;color:#1b1736;-webkit-text-stroke:0.25px #1b1736">AVERAGE DEPOSIT</div>
<div class="t" style="left:863.75px;top:229.50px;font-size:12.936px;letter-spacing:0.263px;color:#64748b;-webkit-text-stroke:0.25px #64748b">Per transaction</div>
<div class="t" style="left:978.70px;top:250.16px;font-size:25.145px;letter-spacing:0.525px;color:#1b1736;-webkit-text-stroke:0.45px #1b1736">£25.00</div>
<div class="t" style="left:1122.75px;top:205.09px;font-size:14.535px;letter-spacing:-0.275px;color:#1b1736;-webkit-text-stroke:0.25px #1b1736">AVERAGE WITHDRAWAL</div>
<div class="t" style="left:1121.75px;top:229.50px;font-size:12.936px;letter-spacing:0.270px;color:#64748b;-webkit-text-stroke:0.25px #64748b">Per transaction</div>
<div class="t" style="left:1239.95px;top:250.16px;font-size:25.145px;letter-spacing:-0.125px;color:#1b1736;-webkit-text-stroke:0.45px #1b1736">£12.00</div>
<div class="t" style="left:1379.75px;top:205.09px;font-size:14.535px;letter-spacing:-0.176px;color:#1b1736;-webkit-text-stroke:0.25px #1b1736">NET VALUE</div>
<div class="t" style="left:1380.75px;top:229.50px;font-size:12.936px;letter-spacing:-0.103px;color:#64748b;-webkit-text-stroke:0.25px #64748b">With Yaspa</div>
<div class="t" style="left:1454.45px;top:250.16px;font-size:25.145px;letter-spacing:-0.046px;color:#1b1736;-webkit-text-stroke:0.45px #1b1736">-£1,597.00</div>
<div class="t" style="left:589.85px;top:337.32px;font-size:16.860px;letter-spacing:0.440px;color:#1b1736;-webkit-text-stroke:0.25px #1b1736">Recent transactions</div>
<div class="t" style="left:605.70px;top:373.97px;font-size:14.390px;letter-spacing:0.526px;color:#7350e3;-webkit-text-stroke:0.25px #7350e3">Pay-ins</div>
<div class="t" style="left:689.40px;top:373.97px;font-size:14.390px;letter-spacing:0.449px;color:#1b1736;-webkit-text-stroke:0.25px #1b1736">Payouts</div>
<div class="t" style="left:1350.75px;top:373.99px;font-size:14.535px;letter-spacing:0.474px;color:#7350e3;-webkit-text-stroke:0.25px #7350e3">Edit columns</div>
<div class="t" style="left:1501.70px;top:373.99px;font-size:14.535px;letter-spacing:0.172px;color:#fff;-webkit-text-stroke:0.25px #fff">Export CSV</div>
<div class="t" style="left:598.60px;top:425.82px;font-size:14.971px;letter-spacing:0.183px;color:#1b1736;-webkit-text-stroke:0.6px #1b1736">Transaction ID</div>
<div class="t" style="left:888.70px;top:425.82px;font-size:14.971px;letter-spacing:0.174px;color:#1b1736;-webkit-text-stroke:0.6px #1b1736">Amount</div>
<div class="t" style="left:958.05px;top:425.82px;font-size:14.971px;letter-spacing:0.469px;color:#1b1736;-webkit-text-stroke:0.6px #1b1736">Date</div>
<div class="t" style="left:1194.65px;top:425.82px;font-size:14.971px;letter-spacing:-0.011px;color:#1b1736;-webkit-text-stroke:0.6px #1b1736">Bank</div>
<div class="t" style="left:1432.60px;top:425.82px;font-size:14.971px;letter-spacing:0.430px;color:#1b1736;-webkit-text-stroke:0.6px #1b1736">Status</div>
<div class="t" style="left:605.70px;top:964.28px;font-size:14.317px;letter-spacing:0.399px;color:#1b1736">Rows per page:</div>
<div class="t" style="left:726.41px;top:964.40px;font-size:14.172px;letter-spacing:-0.300px;color:#1b1736">10</div>
<div class="t" style="left:1324.25px;top:963.36px;font-size:16.642px;letter-spacing:0.362px;color:#1b1736">1-5of 222</div>
<div class="t" style="left:245.75px;top:1019.04px;font-size:17.078px;letter-spacing:-0.219px;color:#0a64e6">Legal Hub</div>
<div class="t" style="left:1281.75px;top:1019.43px;font-size:16.497px;letter-spacing:-0.188px;color:#1b1736">YASPA © 2025 - ALL RIGHTS RESERVED</div>
<div class="t" style="left:598.40px;top:473.97px;font-size:14.680px;letter-spacing:0.641px;color:#1b1736">da18b92c-391e-4d4a-9fc5-9...</div>
<div class="t" style="left:904.36px;top:473.97px;font-size:14.680px;letter-spacing:0.208px;color:#1b1736">£5.00</div>
<div class="t" style="left:959.10px;top:473.97px;font-size:14.680px;letter-spacing:0.325px;color:#1b1736">05 Feb 2025, 22:51:35</div>
<div class="t" style="left:1226.95px;top:473.97px;font-size:14.680px;letter-spacing:0.384px;color:#1b1736">Monzo</div>
<div class="t" style="left:1436.75px;top:474.72px;font-size:12.791px;letter-spacing:0.566px;color:#0c4a2b;-webkit-text-stroke:0.25px #0c4a2b">Complete</div>
<div class="t" style="left:598.40px;top:513.97px;font-size:14.680px;letter-spacing:0.641px;color:#1b1736">dsfgsd92c-391e-v4a-9fc5-9c...</div>
<div class="t" style="left:887.63px;top:513.97px;font-size:14.680px;letter-spacing:0.208px;color:#1b1736">£150.00</div>
<div class="t" style="left:959.10px;top:513.97px;font-size:14.680px;letter-spacing:0.325px;color:#1b1736">05 Feb 2025, 15:03:32</div>
<div class="t" style="left:1226.95px;top:513.97px;font-size:14.680px;letter-spacing:0.384px;color:#1b1736">Natwest</div>
<div class="t" style="left:1436.75px;top:514.72px;font-size:12.791px;letter-spacing:0.566px;color:#7a4500;-webkit-text-stroke:0.25px #7a4500">Accepted</div>
<div class="t" style="left:599.40px;top:553.97px;font-size:14.680px;letter-spacing:0.641px;color:#1b1736">jskdh998l-bhkjshdi987342bkhj</div>
<div class="t" style="left:896.00px;top:553.97px;font-size:14.680px;letter-spacing:0.208px;color:#1b1736">£10.00</div>
<div class="t" style="left:959.10px;top:553.97px;font-size:14.680px;letter-spacing:0.325px;color:#1b1736">05 Feb 2025, 11:01:29</div>
<div class="t" style="left:1226.95px;top:553.97px;font-size:14.680px;letter-spacing:0.384px;color:#1b1736">Natwest</div>
<div class="t" style="left:1435.75px;top:554.72px;font-size:12.791px;letter-spacing:0.566px;color:#12306b;-webkit-text-stroke:0.25px #12306b">In progress</div>
<div class="t" style="left:599.40px;top:593.97px;font-size:14.680px;letter-spacing:0.641px;color:#1b1736">jhksefjh398fn-903hkjff-dnkjse...</div>
<div class="t" style="left:896.00px;top:593.97px;font-size:14.680px;letter-spacing:0.208px;color:#1b1736">£50.00</div>
<div class="t" style="left:959.10px;top:593.97px;font-size:14.680px;letter-spacing:0.325px;color:#1b1736">05 Feb 2025, 09:17:05</div>
<div class="t" style="left:1226.95px;top:593.97px;font-size:14.680px;letter-spacing:0.384px;color:#1b1736">Natwest</div>
<div class="t" style="left:1436.75px;top:594.72px;font-size:12.791px;letter-spacing:0.566px;color:#0c4a2b;-webkit-text-stroke:0.25px #0c4a2b">Complete</div>
<div class="t" style="left:597.40px;top:633.97px;font-size:14.680px;letter-spacing:0.641px;color:#1b1736">hjusd92c-391e-v4a-9fc5-9cb...</div>
<div class="t" style="left:896.00px;top:633.97px;font-size:14.680px;letter-spacing:0.208px;color:#1b1736">£15.00</div>
<div class="t" style="left:959.10px;top:633.97px;font-size:14.680px;letter-spacing:0.325px;color:#1b1736">04 Feb 2025, 23:03:18</div>
<div class="t" style="left:1226.95px;top:633.97px;font-size:14.680px;letter-spacing:0.384px;color:#1b1736">Natwest</div>
<div class="t" style="left:1436.75px;top:634.72px;font-size:12.791px;letter-spacing:0.566px;color:#0c4a2b;-webkit-text-stroke:0.25px #0c4a2b">Complete</div>
<div class="t" style="left:598.40px;top:673.97px;font-size:14.680px;letter-spacing:0.641px;color:#1b1736">uiued92c-391e-v4a-9fc5-9cb...</div>
<div class="t" style="left:896.00px;top:673.97px;font-size:14.680px;letter-spacing:0.208px;color:#1b1736">£10.00</div>
<div class="t" style="left:959.10px;top:673.97px;font-size:14.680px;letter-spacing:0.325px;color:#1b1736">04 Feb 2025, 22:27:21</div>
<div class="t" style="left:1226.95px;top:673.97px;font-size:14.680px;letter-spacing:0.384px;color:#1b1736">Natwest</div>
<div class="t" style="left:1435.75px;top:674.72px;font-size:12.791px;letter-spacing:0.566px;color:#8f1010;-webkit-text-stroke:0.25px #8f1010">Error</div>
<div class="t" style="left:598.40px;top:713.97px;font-size:14.680px;letter-spacing:0.641px;color:#1b1736">csjksd92c-391e-v4a-9fc5-9c...</div>
<div class="t" style="left:896.00px;top:713.97px;font-size:14.680px;letter-spacing:0.208px;color:#1b1736">£15.00</div>
<div class="t" style="left:959.10px;top:713.97px;font-size:14.680px;letter-spacing:0.325px;color:#1b1736">04 Feb 2025, 21:13:18</div>
<div class="t" style="left:1226.95px;top:713.97px;font-size:14.680px;letter-spacing:0.384px;color:#1b1736">Natwest</div>
<div class="t" style="left:1436.75px;top:714.72px;font-size:12.791px;letter-spacing:0.566px;color:#0c4a2b;-webkit-text-stroke:0.25px #0c4a2b">Complete</div>
<div class="t" style="left:598.40px;top:753.97px;font-size:14.680px;letter-spacing:0.641px;color:#1b1736">cjo2c-391e-v4a-9fc5-9cb53d...</div>
<div class="t" style="left:896.00px;top:753.97px;font-size:14.680px;letter-spacing:0.208px;color:#1b1736">£20.00</div>
<div class="t" style="left:959.10px;top:753.97px;font-size:14.680px;letter-spacing:0.325px;color:#1b1736">03 Feb 2025, 12:29:02</div>
<div class="t" style="left:1226.95px;top:753.97px;font-size:14.680px;letter-spacing:0.384px;color:#1b1736">Natwest</div>
<div class="t" style="left:1436.75px;top:754.72px;font-size:12.791px;letter-spacing:0.566px;color:#0c4a2b;-webkit-text-stroke:0.25px #0c4a2b">Complete</div>
<div class="t" style="left:598.40px;top:793.97px;font-size:14.680px;letter-spacing:0.641px;color:#1b1736">qerf92c-391e-v4a-9fc5-9cb5...</div>
<div class="t" style="left:896.00px;top:793.97px;font-size:14.680px;letter-spacing:0.208px;color:#1b1736">£22.00</div>
<div class="t" style="left:959.10px;top:793.97px;font-size:14.680px;letter-spacing:0.325px;color:#1b1736">01 Feb 2025, 20:51:56</div>
<div class="t" style="left:1226.95px;top:793.97px;font-size:14.680px;letter-spacing:0.384px;color:#1b1736">Natwest</div>
<div class="t" style="left:1436.75px;top:794.72px;font-size:12.791px;letter-spacing:0.566px;color:#0c4a2b;-webkit-text-stroke:0.25px #0c4a2b">Complete</div>
<div class="t" style="left:599.40px;top:833.97px;font-size:14.680px;letter-spacing:0.641px;color:#1b1736">jlijjfenlje-984njekier378924b4...</div>
<div class="t" style="left:896.00px;top:833.97px;font-size:14.680px;letter-spacing:0.208px;color:#1b1736">£15.00</div>
<div class="t" style="left:959.10px;top:833.97px;font-size:14.680px;letter-spacing:0.325px;color:#1b1736">01 Feb 2025, 18:45:44</div>
<div class="t" style="left:1226.95px;top:833.97px;font-size:14.680px;letter-spacing:0.384px;color:#1b1736">Natwest</div>
<div class="t" style="left:1436.75px;top:834.72px;font-size:12.791px;letter-spacing:0.566px;color:#0c4a2b;-webkit-text-stroke:0.25px #0c4a2b">Complete</div>
<div class="t" style="left:598.40px;top:873.97px;font-size:14.680px;letter-spacing:0.641px;color:#1b1736">liuf983098vj-34897fjheljkfkjh...</div>
<div class="t" style="left:896.00px;top:873.97px;font-size:14.680px;letter-spacing:0.208px;color:#1b1736">£15.00</div>
<div class="t" style="left:959.10px;top:873.97px;font-size:14.680px;letter-spacing:0.325px;color:#1b1736">01 Feb 2025, 17:19:37</div>
<div class="t" style="left:1226.95px;top:873.97px;font-size:14.680px;letter-spacing:0.384px;color:#1b1736">Natwest</div>
<div class="t" style="left:1436.75px;top:874.72px;font-size:12.791px;letter-spacing:0.566px;color:#0c4a2b;-webkit-text-stroke:0.25px #0c4a2b">Complete</div>
<div class="t" style="left:599.40px;top:913.97px;font-size:14.680px;letter-spacing:0.641px;color:#1b1736">jkdsfjsd92c-391e-v4a-9fc5-9...</div>
<div class="t" style="left:896.00px;top:913.97px;font-size:14.680px;letter-spacing:0.208px;color:#1b1736">£15.00</div>
<div class="t" style="left:959.10px;top:913.97px;font-size:14.680px;letter-spacing:0.325px;color:#1b1736">01 Feb 2025, 16:23:15</div>
<div class="t" style="left:1226.95px;top:913.97px;font-size:14.680px;letter-spacing:0.384px;color:#1b1736">Natwest</div>
<div class="t" style="left:1436.75px;top:914.72px;font-size:12.791px;letter-spacing:0.566px;color:#0c4a2b;-webkit-text-stroke:0.25px #0c4a2b">Complete</div>
<div class="t" style="left:1503.80px;top:474.26px;font-size:14.099px;letter-spacing:1.175px;color:#d14343;-webkit-text-stroke:0.25px #d14343">Refunded</div>
</div></body></html>
